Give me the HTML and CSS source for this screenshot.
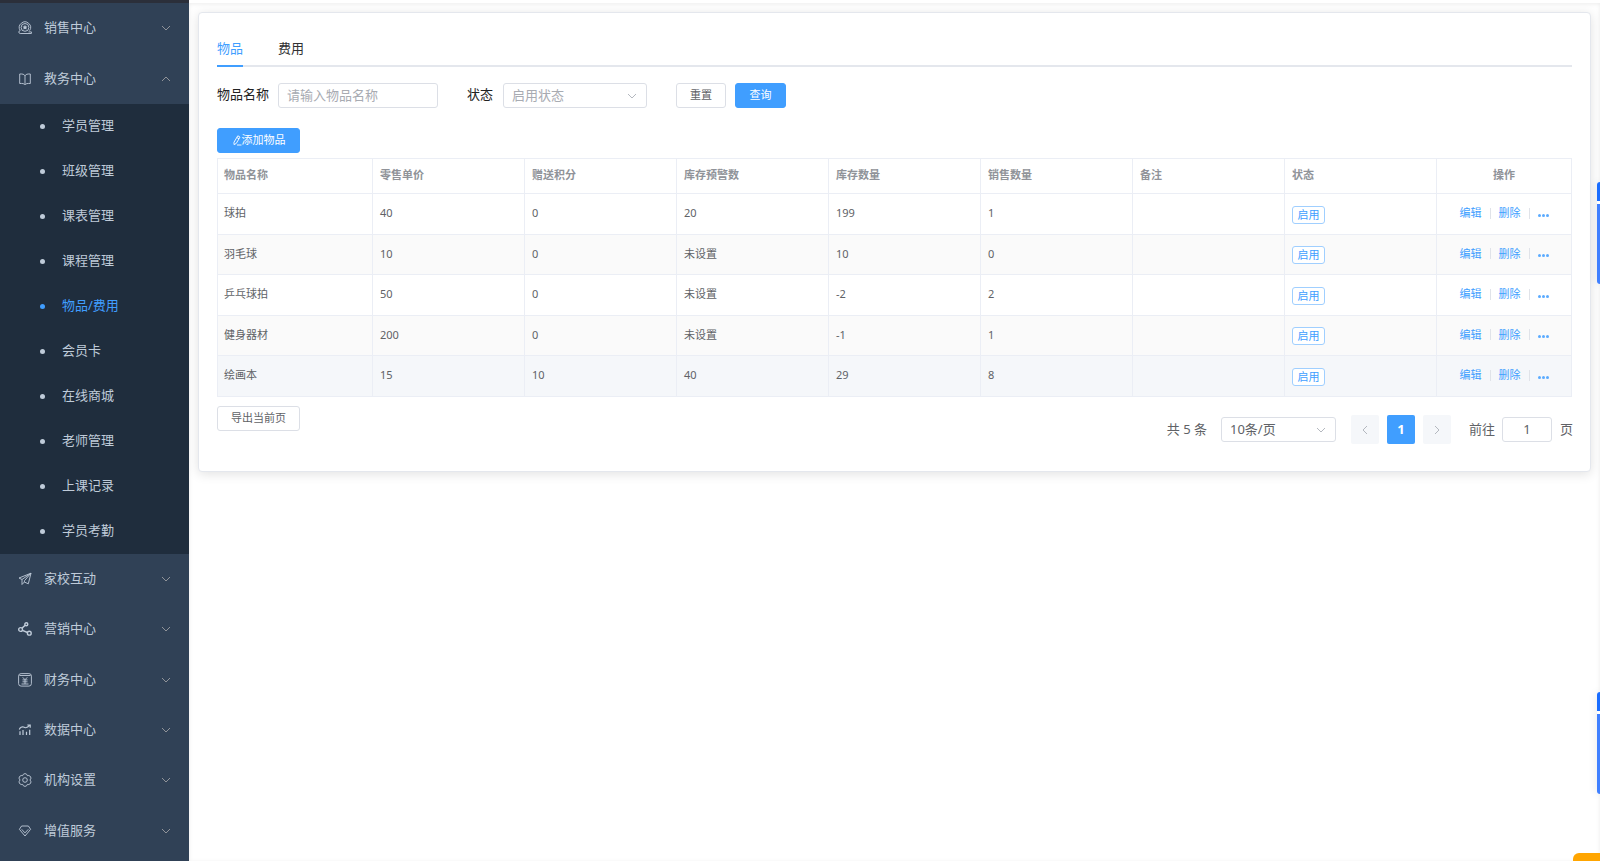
FILE: index.html
```html
<!DOCTYPE html>
<html lang="zh-CN">
<head>
<meta charset="utf-8">
<title>物品/费用</title>
<link rel="stylesheet" href="styles.css">
</head>
<body>
<svg class="defs" aria-hidden="true">
  <symbol id="down" viewBox="0 0 12 12"><path d="M2 4 6 8 10 4"/></symbol>
  <symbol id="up" viewBox="0 0 12 12"><path d="M2 8 6 4 10 8"/></symbol>
  <symbol id="left" viewBox="0 0 12 12"><path d="M8 2 4 6l4 4"/></symbol>
  <symbol id="right" viewBox="0 0 12 12"><path d="M4 2l4 4-4 4"/></symbol>
</svg>
<div class="app">
  <nav class="sidebar" aria-label="主菜单">
    <button class="menu"><svg class="icon" viewBox="0 0 14 14"><path d="M2.2 9.5A5.6 5.6 0 1 1 11.6 9.6M2.2 9.500C.4 9.800 .3 12.400 2.200 12.500H13.400V10.900H10.500"/><circle cx="7" cy="6.400" r="3.900"/><path class="solid" d="M7 3.800l.8 1.600 1.700.2-1.200 1.200.3 1.700L7 7.700l-1.600.8.3-1.700-1.200-1.200 1.700-.2z"/></svg><span>销售中心</span><svg class="arrow"><use href="#down"/></svg></button>
    <button class="menu"><svg class="icon" viewBox="0 0 14 14"><path d="M7 3.800C6.300 2.300 4.500 1.800 1.700 2V11.500C4.500 11.300 6.300 11.600 7 12.800 7.700 11.600 9.500 11.300 12.300 11.500V2C9.500 1.800 7.700 2.300 7 3.800ZM7 3.800V12.500"/></svg><span>教务中心</span><svg class="arrow"><use href="#up"/></svg></button>
    <ul class="submenu">
      <li><a href="#"><span>学员管理</span></a></li>
      <li><a href="#"><span>班级管理</span></a></li>
      <li><a href="#"><span>课表管理</span></a></li>
      <li><a href="#"><span>课程管理</span></a></li>
      <li><a href="#" class="active"><span>物品/费用</span></a></li>
      <li><a href="#"><span>会员卡</span></a></li>
      <li><a href="#"><span>在线商城</span></a></li>
      <li><a href="#"><span>老师管理</span></a></li>
      <li><a href="#"><span>上课记录</span></a></li>
      <li><a href="#"><span>学员考勤</span></a></li>
    </ul>
    <button class="menu"><svg class="icon" viewBox="0 0 14 14"><path d="M13 1.200 1 6 4 7.500V12.500L6.400 10 10.300 11.800ZM13 1.200 4 7.500M13 1.200 6.400 8.800V10"/></svg><span>家校互动</span><svg class="arrow"><use href="#down"/></svg></button>
    <button class="menu"><svg class="icon bold" viewBox="0 0 14 14"><circle cx="2.600" cy="7.500" r="1.900"/><circle cx="8.300" cy="2.300" r="1.500"/><circle cx="11.300" cy="11.200" r="1.900"/><path d="M4 6.100 7.200 3.300M4.400 8.300 9.500 10.500"/></svg><span>营销中心</span><svg class="arrow"><use href="#down"/></svg></button>
    <button class="menu"><svg class="icon" viewBox="0 0 14 14"><rect x=".6" y=".6" width="12.800" height="12.500" rx="2.500"/><path d="M1.500 2.500H12.500M4.700 4.300 7 6.700 9.300 4.300M4.500 6.900H9.500M4.500 8.800H9.500M7 6.700V11M3.500 11H10.500"/></svg><span>财务中心</span><svg class="arrow"><use href="#down"/></svg></button>
    <button class="menu"><svg class="icon" viewBox="0 0 14 14"><path class="bars" d="M1.300 6.500C2 4.500 4 3.300 5.500 4 7.500 5 9 5.500 11.800 2.200M9.300 2H12.200V4.700"/><path class="bars" d="M2 8.300V12M5 7V12M8.500 8.800V12M11.700 6.800V12"/></svg><span>数据中心</span><svg class="arrow"><use href="#down"/></svg></button>
    <button class="menu"><svg class="icon" viewBox="0 0 14 14"><path d="M5.300 1.300Q7-.2 8.700 1.300L9.300 2.600 10.800 2.500Q13 3.100 13 5.200L12 7 13 8.800Q13 10.900 10.800 11.500L9.300 11.400 8.700 12.700Q7 14.200 5.300 12.700L4.700 11.400 3.200 11.500Q1 10.900 1 8.800L2 7 1 5.200Q1 3.100 3.200 2.500L4.700 2.600Z"/><circle cx="7" cy="7" r="2.300"/></svg><span>机构设置</span><svg class="arrow"><use href="#down"/></svg></button>
    <button class="menu"><svg class="icon" viewBox="0 0 14 14"><path d="M3.600 2H10.400L12.600 5.300 7 12 1.400 5.300ZM3.700 5.300 7 8.900 10.300 5.300"/></svg><span>增值服务</span><svg class="arrow"><use href="#down"/></svg></button>
  </nav>
  <main class="main">
    <section class="card">
      <div class="tabs" role="tablist">
        <button class="tab selected" role="tab" aria-selected="true">物品</button>
        <button class="tab" role="tab" aria-selected="false">费用</button>
      </div>
      <form class="filters">
        <label for="name">物品名称</label>
        <input class="box name" id="name" type="text" placeholder="请输入物品名称">
        <label class="state-label" for="state">状态</label>
        <span class="pick state"><select class="box" id="state"><option>启用状态</option></select><svg class="arrow"><use href="#down"/></svg></span>
        <button class="btn reset" type="button">重置</button>
        <button class="btn primary query" type="button">查询</button>
      </form>
      <button class="btn primary wide"><svg class="pen" viewBox="0 0 10 12"><path d="M5.800 1.800 8 3.100 4.200 9.500 2 10.600 2 8.200ZM4.800 3.500 7 4.800M5 11H9.500"/></svg>添加物品</button>
      <table class="grid">
        <thead><tr><th class="first">物品名称</th><th>零售单价</th><th>赠送积分</th><th>库存预警数</th><th>库存数量</th><th>销售数量</th><th>备注</th><th>状态</th><th class="ops">操作</th></tr></thead>
        <tbody>
          <tr><td>球拍</td><td>40</td><td>0</td><td>20</td><td>199</td><td>1</td><td></td><td><span class="tag">启用</span></td><td class="ops"><div class="links"><a href="#">编辑</a><i></i><a href="#">删除</a><i></i><button class="more" aria-label="更多"><b></b><b></b><b></b></button></div></td></tr>
          <tr><td>羽毛球</td><td>10</td><td>0</td><td>未设置</td><td>10</td><td>0</td><td></td><td><span class="tag">启用</span></td><td class="ops"><div class="links"><a href="#">编辑</a><i></i><a href="#">删除</a><i></i><button class="more" aria-label="更多"><b></b><b></b><b></b></button></div></td></tr>
          <tr><td>乒乓球拍</td><td>50</td><td>0</td><td>未设置</td><td>-2</td><td>2</td><td></td><td><span class="tag">启用</span></td><td class="ops"><div class="links"><a href="#">编辑</a><i></i><a href="#">删除</a><i></i><button class="more" aria-label="更多"><b></b><b></b><b></b></button></div></td></tr>
          <tr><td>健身器材</td><td>200</td><td>0</td><td>未设置</td><td>-1</td><td>1</td><td></td><td><span class="tag">启用</span></td><td class="ops"><div class="links"><a href="#">编辑</a><i></i><a href="#">删除</a><i></i><button class="more" aria-label="更多"><b></b><b></b><b></b></button></div></td></tr>
          <tr class="hover"><td>绘画本</td><td>15</td><td>10</td><td>40</td><td>29</td><td>8</td><td></td><td><span class="tag">启用</span></td><td class="ops"><div class="links"><a href="#">编辑</a><i></i><a href="#">删除</a><i></i><button class="more" aria-label="更多"><b></b><b></b><b></b></button></div></td></tr>
        </tbody>
      </table>
      <footer class="foot">
        <button class="btn wide">导出当前页</button>
        <div class="pager">
          <span>共 5 条</span>
          <span class="pick size"><select class="box" aria-label="每页条数"><option>10条/页</option></select><svg class="arrow"><use href="#down"/></svg></span>
          <button class="page" aria-label="上一页"><svg class="arrow"><use href="#left"/></svg></button>
          <button class="page current">1</button>
          <button class="page" aria-label="下一页"><svg class="arrow"><use href="#right"/></svg></button>
          <label for="goto">前往</label>
          <input class="box goto" id="goto" type="text" value="1">
          <span>页</span>
        </div>
      </footer>
    </section>
  </main>
</div>
<div class="dock dock-top"></div>
<div class="dock dock-bottom"></div>
<div class="corner"></div>
</body>
</html>
```
FILE: styles.css
```css
* { box-sizing: border-box; }
body {
  margin: 0;
  overflow: hidden;
  background: #fff;
  color: #606266;
  font: 13px/20px "Noto Sans", "Noto Sans CJK SC", sans-serif;
}
button, input, select { font: inherit; color: inherit; margin: 0; }
button { padding: 0; border: 0; background: none; cursor: pointer; }
a { color: inherit; text-decoration: none; }
svg { fill: none; stroke: currentColor; flex: none; }
.defs { position: absolute; width: 0; height: 0; }
.app { display: flex; min-height: 100vh; }

.sidebar {
  display: flex;
  flex-direction: column;
  width: 189px;
  padding-bottom: 5px;
  border-top: 3px solid #2b2f3a;
  background: #304156;
  color: #bfcbd9;
}
.menu {
  display: flex;
  flex: 1 1 50px;
  align-items: center;
  padding: 0 17px 0 18px;
}
.menu span, .submenu span { padding-bottom: 2px; }
.icon { width: 14px; height: 14px; margin-right: 12px; stroke-width: .9; }
.icon.bold { stroke-width: 1.4; }
.icon .solid { fill: currentColor; stroke: none; }
.icon .bars { stroke-width: 1.2; }
.arrow { width: 12px; height: 12px; color: #909399; }
.menu .arrow { margin-left: auto; }
.submenu { margin: 0; padding: 0; list-style: none; background: #1f2d3d; }
.submenu a { display: flex; align-items: center; height: 45px; padding-left: 40px; }
.submenu a::before {
  content: "";
  width: 5px;
  height: 5px;
  margin-right: 17px;
  border-radius: 50%;
  background: currentColor;
}
.submenu .active { color: #409eff; }

.main {
  flex: 1;
  min-width: 0;
  padding: 9px 9px 0;
  border-top: 3px solid #fff;
  box-shadow: inset 0 1px 4px rgba(0, 0, 0, .08);
}
.card {
  padding: 23px 18px 27px;
  border: 1px solid #e4e7ed;
  border-radius: 4px;
  background: #fff;
  box-shadow: 0 2px 12px rgba(0, 0, 0, .12);
}
.tabs { display: flex; gap: 35px; border-bottom: 2px solid #e4e7ed; color: #303133; }
.tab { height: 31px; margin-bottom: -2px; padding-bottom: 6px; border-bottom: 2px solid transparent; }
.tab.selected { color: #409eff; border-color: #409eff; }
.filters { display: flex; align-items: center; margin: 16px 0 20px; color: #222; }
.filters label { padding-bottom: 3px; }
.box {
  width: 100%;
  height: 25px;
  padding: 0 8px 2px;
  border: 1px solid #dcdfe6;
  border-radius: 3px;
  outline: 0;
  background: #fff;
  appearance: none;
}
.box::placeholder { color: #a8abb2; opacity: 1; }
.box.name { width: 160px; margin-left: 9px; }
.state-label { margin-left: 29px; }
.pick { display: grid; align-items: center; }
.pick > * { grid-area: 1 / 1; }
.pick .arrow { justify-self: end; margin-right: 9px; color: #b4b8bf; pointer-events: none; }
.state { width: 144px; margin-left: 10px; color: #a8abb2; }
.btn {
  height: 25px;
  padding-bottom: 1px;
  border: 1px solid #dcdfe6;
  border-radius: 3px;
  background: #fff;
  color: #606266;
  font-size: 11px;
  line-height: 20px;
}
.btn.primary { border-color: #409eff; background: #409eff; color: #fff; }
.reset { width: 50px; margin-left: 29px; }
.query { width: 51px; margin-left: 9px; }
.wide { display: flex; align-items: center; justify-content: center; width: 83px; }
.pen { width: 10px; height: 12px; stroke-width: .9; }

.grid {
  width: 100%;
  margin-top: 5px;
  border-collapse: collapse;
  table-layout: fixed;
  font-size: 11px;
  line-height: 16px;
}
.grid th, .grid td { padding: 0 7px 2px; border: 1px solid #ebeef5; text-align: left; }
.grid th:first-child, .grid td:first-child { padding-left: 6px; }
.grid th { height: 35px; color: #909399; font-weight: 700; }
.grid td { height: 41px; }
.grid tr:nth-child(even) td { height: 40px; background: #fafafa; }
.grid .hover td { background: #f5f7fa; }
.grid .first { width: 155px; }
.grid .ops { width: 135px; text-align: center; }
.tag {
  display: block;
  width: 33px;
  height: 18px;
  margin-top: 3px;
  border: 1px solid #a0cfff;
  border-radius: 3px;
  background: #fff;
  color: #409eff;
  text-align: center;
}
.links { display: flex; align-items: center; justify-content: center; gap: 8px; color: #409eff; }
.links i { width: 1px; height: 11px; background: #e0e3e9; }
.more { display: flex; gap: 1px; padding-top: 4px; }
.more b { width: 3px; height: 3px; border-radius: 50%; background: #5babff; }

.foot { display: flex; align-items: flex-start; justify-content: space-between; padding-top: 9px; }
.pager { display: flex; align-items: center; margin-right: -1px; padding-top: 9px; }
.pager > span:not(.pick), .pager label { padding-bottom: 2px; }
.size { width: 115px; margin: 0 15px 0 14px; }
.page {
  display: grid;
  place-items: center;
  width: 28px;
  height: 29px;
  margin-right: 8px;
  border-radius: 2px;
  background: #f5f7fa;
}
.page .arrow { color: #b4b8bf; }
.page.current { padding-bottom: 2px; background: #409eff; color: #fff; font-weight: 700; }
.pager label { margin-left: 10px; }
.box.goto { width: 50px; margin: 0 8px 0 7px; text-align: center; }

.dock {
  position: fixed;
  right: 0;
  width: 3px;
  height: 102px;
  border-radius: 3px 0 0 3px;
  background: linear-gradient(#1a6dff 19px, #fff 19px, #fff 22px, #4080ff 22px);
  box-shadow: 0 0 8px rgba(0, 0, 0, .15);
}
.dock-top { top: 182px; }
.dock-bottom { top: 692px; }
.corner {
  position: fixed;
  right: 0;
  bottom: 0;
  width: 27px;
  height: 8px;
  border-radius: 6px 0 0 0;
  background: #ffa500;
}
```
